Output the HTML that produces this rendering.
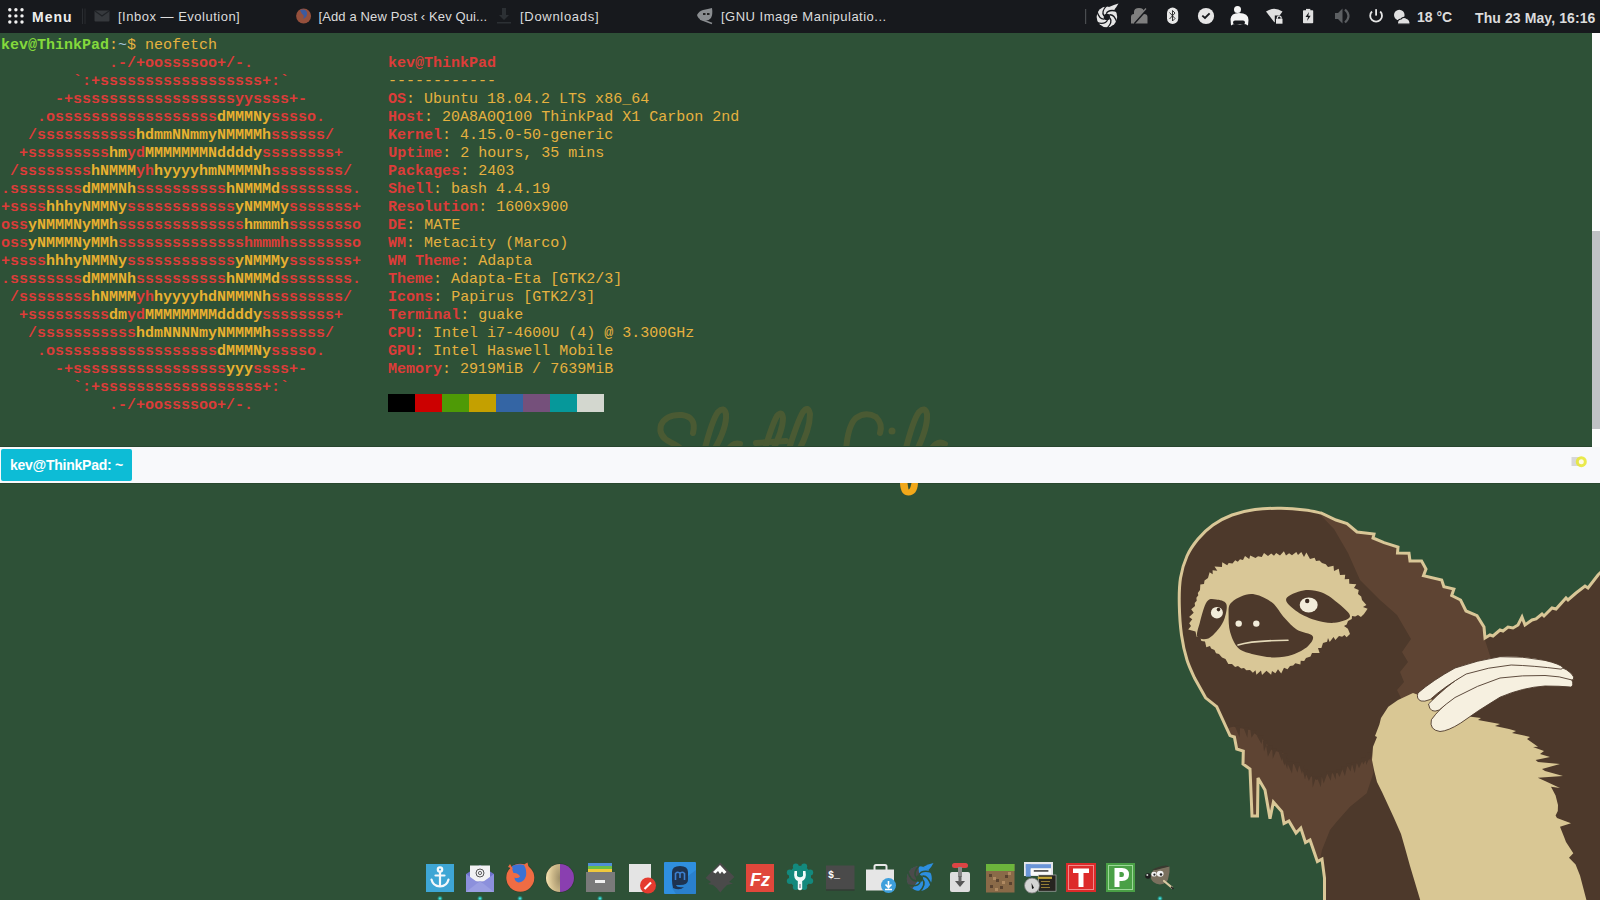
<!DOCTYPE html>
<html><head><meta charset="utf-8">
<style>
html,body{margin:0;padding:0}
body{width:1600px;height:900px;overflow:hidden;position:relative;background:#2e5137;font-family:"Liberation Sans",sans-serif}
#panel{position:absolute;left:0;top:0;width:1600px;height:33px;background:#17191d;color:#dcdcdc;font-size:13px}
#panel .t{position:absolute;top:0;line-height:33px;white-space:nowrap}
#term{position:absolute;left:0;top:33px;width:1592px;height:414px;overflow:hidden}
#term pre{position:absolute;left:1px;top:4px;margin:0;font-family:"Liberation Mono",monospace;font-size:15px;line-height:18px;color:#e0b040}
#term b{font-weight:bold}
.r{color:#dd3c39}.y{color:#e8b030}.g{color:#84d93c}.yl{color:#e6b13f;font-weight:normal}.bl{color:#a4c4dc}
.blk{display:inline-block;width:27px;height:18px;vertical-align:top;position:relative;top:-3px}
#sb{position:absolute;left:1592px;top:33px;width:8px;height:414px;background:#fdfdfd}
#sbt{position:absolute;left:1592px;top:231px;width:8px;height:198px;background:#c0c2c5}
#tabs{position:absolute;left:0;top:447px;width:1600px;height:36px;background:#f8f9fb}
#tab{position:absolute;left:1px;top:2px;width:131px;height:32px;background:#0dbcd6;border-radius:2px;color:#fff;font-weight:bold;font-size:14px;line-height:32px;text-indent:9px;letter-spacing:-0.25px;white-space:nowrap}
#dock{position:absolute;left:0;top:855px;width:1600px;height:45px}
.ic{position:absolute;top:863px;width:30px;height:30px}
</style></head><body>
<svg style="position:absolute;left:0;top:0" width="1600" height="900" viewBox="0 0 1600 900">
<defs><clipPath id="silc"><path d="M1194.4,677.8 C1193.2,674.8 1189.2,667.1 1187.0,660.0 C1184.8,652.9 1182.8,644.2 1181.5,635.0 C1180.2,625.8 1179.5,614.5 1179.3,605.0 C1179.1,595.5 1179.2,586.2 1180.5,578.0 C1181.8,569.8 1184.1,562.5 1187.0,556.0 C1189.9,549.5 1193.7,544.2 1198.0,539.0 C1202.3,533.8 1207.3,529.0 1213.0,525.0 C1218.7,521.0 1225.0,517.6 1232.0,515.0 C1239.0,512.4 1246.8,510.6 1255.0,509.5 C1263.2,508.4 1272.7,508.2 1281.0,508.3 C1289.3,508.4 1298.3,509.2 1305.0,510.0 C1311.7,510.8 1318.3,512.5 1321.0,513.0 L1336,520 L1347,523.6 L1357,532 L1374,534 L1373,538 L1384,542.7 L1398,547 L1397.5,553 L1409,553.3 L1410,561 L1421.6,561 L1426,569 L1423.5,575.6
L1441.7,580 L1443.9,586.7 L1453.9,589 L1451.7,595.6 L1460.6,600 L1466,611 L1477,615.6 L1484,627 L1485,638 L1490,635 L1493,636 L1500,630 L1503,631 L1508,627 L1513,628 L1518,625 L1522,617 L1525,625 L1532,620 L1536,619 L1542,614 L1544,616 L1552,608 L1556,609 L1566,598 L1568,600 L1576,593 L1585,586 L1588,588 L1598,575 L1602,571 L1602,906 L1324.5,906
L1324.5,878 L1322,859 L1317.4,861.5 L1310,840 L1305.5,842.5 L1300.8,828 L1296,833 L1288.9,821 L1284,823.5 L1281.8,811.6
L1273.4,802 L1270,818.8 L1265,790 L1258,778 L1257.5,816 L1252,816 L1250,769 L1243,764 L1243.3,751 L1236.7,749 L1234.4,737 L1230,735.6
L1216.7,706.7 L1205.6,697.8 L1194.4,677.8 Z"/></clipPath></defs>
<path fill="#4d392b" d="M1194.4,677.8 C1193.2,674.8 1189.2,667.1 1187.0,660.0 C1184.8,652.9 1182.8,644.2 1181.5,635.0 C1180.2,625.8 1179.5,614.5 1179.3,605.0 C1179.1,595.5 1179.2,586.2 1180.5,578.0 C1181.8,569.8 1184.1,562.5 1187.0,556.0 C1189.9,549.5 1193.7,544.2 1198.0,539.0 C1202.3,533.8 1207.3,529.0 1213.0,525.0 C1218.7,521.0 1225.0,517.6 1232.0,515.0 C1239.0,512.4 1246.8,510.6 1255.0,509.5 C1263.2,508.4 1272.7,508.2 1281.0,508.3 C1289.3,508.4 1298.3,509.2 1305.0,510.0 C1311.7,510.8 1318.3,512.5 1321.0,513.0 L1336,520 L1347,523.6 L1357,532 L1374,534 L1373,538 L1384,542.7 L1398,547 L1397.5,553 L1409,553.3 L1410,561 L1421.6,561 L1426,569 L1423.5,575.6
L1441.7,580 L1443.9,586.7 L1453.9,589 L1451.7,595.6 L1460.6,600 L1466,611 L1477,615.6 L1484,627 L1485,638 L1490,635 L1493,636 L1500,630 L1503,631 L1508,627 L1513,628 L1518,625 L1522,617 L1525,625 L1532,620 L1536,619 L1542,614 L1544,616 L1552,608 L1556,609 L1566,598 L1568,600 L1576,593 L1585,586 L1588,588 L1598,575 L1602,571 L1602,906 L1324.5,906
L1324.5,878 L1322,859 L1317.4,861.5 L1310,840 L1305.5,842.5 L1300.8,828 L1296,833 L1288.9,821 L1284,823.5 L1281.8,811.6
L1273.4,802 L1270,818.8 L1265,790 L1258,778 L1257.5,816 L1252,816 L1250,769 L1243,764 L1243.3,751 L1236.7,749 L1234.4,737 L1230,735.6
L1216.7,706.7 L1205.6,697.8 L1194.4,677.8 Z"/>
<g clip-path="url(#silc)">
<path fill="#5e4433" d="M1320,514.5 L1336,521.5 L1347,525 L1357,533.5 L1374,535.5 L1373,539.5 L1384,544 L1398,548.5 L1397.5,554.5 L1409,555 L1410,562.5 L1421.6,562.5 L1426,570.5 L1423.5,577 L1441.7,581.5 L1443.9,588 L1453.9,590.5 L1451.7,597 L1460.6,601.5 L1466,612.5 L1477,617 L1484,628.5 L1485,640 L1492,662 L1470,690 L1400,712
L1402,700 L1397,690 L1404,682 L1400,672 L1408,662 L1402,652 L1411,639 L1397,615 L1380,600 L1360,580 L1348,553 L1334,529 Z"/>
<path fill="#5e4433" d="M1190.0,700.0 L1212.0,712.0 L1228.0,728.0 L1233.3,726.7 L1250.0,730.0 L1263.3,740.0 L1271.7,750.0 L1283.3,753.3 L1286.7,763.3 L1300.0,765.0 L1306.7,773.3 L1316.7,780.0 L1326.7,773.3 L1336.7,773.3 L1346.7,766.7 L1356.7,763.3 L1366.7,758.3 L1371.7,753.3 L1372.0,753.0 L1373.3,773.3 L1366.7,793.3 L1350.0,806.7 L1336.7,821.7 L1330.0,830.0 L1322.0,850.0 L1318.0,870.0 L1314.0,906.0 L1180.0,906.0 Z"/>
<path fill="#4d392b" d="M1367.6,752.6 L1369.9,760.8 L1373.2,752.6 Z M1365.0,755.1 L1366.2,765.1 L1370.9,755.1 Z M1360.9,757.6 L1363.2,764.6 L1367.4,757.6 Z M1355.7,760.1 L1359.0,768.3 L1362.7,760.1 Z M1351.5,762.2 L1354.7,773.3 L1356.9,762.2 Z M1346.2,763.8 L1350.6,771.6 L1352.1,763.8 Z M1341.1,766.3 L1344.9,775.9 L1347.3,766.3 Z M1336.0,769.7 L1339.5,777.0 L1342.3,769.7 Z M1332.1,771.3 L1335.6,779.8 L1336.2,771.3 Z M1326.1,771.3 L1330.7,780.7 L1332.2,771.3 Z M1320.8,773.0 L1323.7,783.6 L1327.5,773.0 Z M1316.5,776.3 L1320.9,787.3 L1321.8,776.3 Z M1312.0,776.3 L1312.7,787.7 L1316.3,776.3 Z M1305.7,773.0 L1308.9,781.1 L1312.6,773.0 Z M1302.5,769.2 L1305.0,779.4 L1307.5,769.2 Z M1299.1,765.1 L1302.0,774.0 L1304.2,765.1 Z M1293.3,762.6 L1297.4,772.5 L1300.0,762.6 Z M1286.7,761.8 L1292.0,773.4 L1293.3,761.8 Z M1283.6,758.8 L1287.3,769.2 L1288.1,758.8 Z M1280.8,753.8 L1284.4,765.7 L1287.5,753.8 Z M1278.1,750.5 L1281.7,761.1 L1282.7,750.5 Z M1272.2,748.8 L1272.8,758.7 L1277.0,748.8 Z M1266.1,745.5 L1267.9,756.8 L1273.1,745.5 Z M1262.8,740.5 L1264.0,751.5 L1268.0,740.5 Z M1256.8,735.5 L1261.5,744.0 L1263.2,735.5 Z M1250.4,730.5 L1251.5,737.7 L1256.3,730.5 Z M1243.3,727.2 L1247.4,737.8 L1248.3,727.2 Z M1234.7,725.5 L1239.5,737.4 L1240.3,725.5 Z "/>
</g>
<path fill="none" stroke="#d9c797" stroke-width="3" stroke-linejoin="miter" stroke-miterlimit="3" d="M1194.4,677.8 C1193.2,674.8 1189.2,667.1 1187.0,660.0 C1184.8,652.9 1182.8,644.2 1181.5,635.0 C1180.2,625.8 1179.5,614.5 1179.3,605.0 C1179.1,595.5 1179.2,586.2 1180.5,578.0 C1181.8,569.8 1184.1,562.5 1187.0,556.0 C1189.9,549.5 1193.7,544.2 1198.0,539.0 C1202.3,533.8 1207.3,529.0 1213.0,525.0 C1218.7,521.0 1225.0,517.6 1232.0,515.0 C1239.0,512.4 1246.8,510.6 1255.0,509.5 C1263.2,508.4 1272.7,508.2 1281.0,508.3 C1289.3,508.4 1298.3,509.2 1305.0,510.0 C1311.7,510.8 1318.3,512.5 1321.0,513.0 L1336,520 L1347,523.6 L1357,532 L1374,534 L1373,538 L1384,542.7 L1398,547 L1397.5,553 L1409,553.3 L1410,561 L1421.6,561 L1426,569 L1423.5,575.6
L1441.7,580 L1443.9,586.7 L1453.9,589 L1451.7,595.6 L1460.6,600 L1466,611 L1477,615.6 L1484,627 L1485,638 L1490,635 L1493,636 L1500,630 L1503,631 L1508,627 L1513,628 L1518,625 L1522,617 L1525,625 L1532,620 L1536,619 L1542,614 L1544,616 L1552,608 L1556,609 L1566,598 L1568,600 L1576,593 L1585,586 L1588,588 L1598,575 L1602,571 L1602,906 L1324.5,906
L1324.5,878 L1322,859 L1317.4,861.5 L1310,840 L1305.5,842.5 L1300.8,828 L1296,833 L1288.9,821 L1284,823.5 L1281.8,811.6
L1273.4,802 L1270,818.8 L1265,790 L1258,778 L1257.5,816 L1252,816 L1250,769 L1243,764 L1243.3,751 L1236.7,749 L1234.4,737 L1230,735.6
L1216.7,706.7 L1205.6,697.8 L1194.4,677.8 Z"/>
<path fill="#d9c794" d="M1413,693 L1398,700 L1388.3,706.7 L1381,718 L1379.4,724.4 L1375,736 L1377,737 L1373,746.7 L1372,760 L1374,770 L1377,782 L1382,792 L1388,805 L1394,818 L1401,834 L1405,848 L1410,866 L1422,906 L1588,906 L1580,875.6 L1575.6,864.4 L1569,857.8 L1573.3,853.3 L1566,842 L1564.4,837.8 L1560,826.7 L1571,823.3 L1557,818 L1555.6,815.6 L1557.8,811 L1558,805 L1555.6,795.6 L1551,786.7 L1560,788 L1545,781 L1537.8,777.8 L1563,776 L1545,771 L1542,769 L1560,764 L1538,762 L1535.6,760 L1550,757 L1540,754 L1544,751 L1533,747 L1538,746.7 L1527,739 L1530,737 L1524,735.6 L1512,733 L1516,731 L1509,729 L1495,726 L1500,724 L1489,722 L1478,720 L1481,718 L1471,716.7 L1455,708 Z"/>
<!-- claws -->
<g fill="#f6f0e0" stroke="#4d392b" stroke-width="0.9" stroke-linejoin="round">
<path d="M1431.4,719.7 Q1439,709 1455,696 Q1478,683 1500,676.5 Q1522.5,672.5 1545,673.5 Q1566,675 1572,680 Q1574,686 1570.9,687.1 Q1560,686 1545,686 Q1522.5,687.5 1500,697.2 Q1477.5,710.7 1460.6,723.1 Q1448.2,731 1440,731.5 Q1429,730 1431.4,719.7 Z"/>
<path d="M1428.5,704 Q1445,687 1466,673 Q1488.7,662 1511.2,660 Q1533.7,660 1552,664 Q1570,669 1573.7,677 Q1574,680 1572,680 Q1560,676 1545,675.5 Q1522.5,675 1500,678 Q1477.5,685 1455,697.5 Q1446,704 1439.2,710 Q1430,714 1428.5,704 Z"/>
<path d="M1417.9,693 Q1432.5,680.4 1455,668 Q1477.5,660.1 1500,656.7 Q1522.5,655.9 1545,660.4 Q1560,664 1563,667.5 Q1562,669.5 1560.7,669.1 Q1533.7,665.7 1511.2,665 Q1488.7,666.9 1466.2,674 Q1443.7,687.1 1430.2,699.5 Q1424,702 1421,701 Q1416,699 1417.9,693 Z"/>
</g>

<!-- face mask tan -->
<path fill="#d9c797" d="M1191.0,626.0 L1189.2,623.2 L1192.3,619.3 L1189.1,617.1 L1193.7,612.7 L1191.2,609.2 L1195.0,606.0 L1194.7,603.0 L1196.7,600.7 L1196.4,597.7 L1198.3,595.3 L1197.8,592.9 L1200.0,590.0 L1200.3,584.6 L1204.0,584.0 L1204.5,580.6 L1208.0,578.0 L1209.6,572.2 L1212.7,574.3 L1212.6,570.2 L1217.3,570.7 L1214.5,566.6 L1222.0,567.0 L1222.2,562.3 L1227.2,565.2 L1228.7,563.1 L1232.5,563.5 L1235.2,560.2 L1237.8,561.8 L1240.0,559.2 L1243.0,560.0 L1245.0,556.1 L1249.2,559.0 L1250.2,555.6 L1255.5,558.0 L1258.0,556.3 L1261.8,557.0 L1264.0,552.9 L1268.0,556.0 L1271.2,553.6 L1274.0,555.8 L1276.2,552.9 L1280.0,555.6 L1283.9,551.3 L1286.0,555.4 L1289.1,553.3 L1292.0,555.2 L1296.3,552.0 L1298.0,555.0 L1301.3,552.0 L1304.0,557.0 L1306.4,552.6 L1310.0,559.0 L1314.6,557.7 L1316.0,561.0 L1319.5,560.5 L1322.0,563.0 L1325.8,564.2 L1328.0,567.0 L1333.5,565.8 L1334.0,571.0 L1338.7,568.7 L1340.0,575.0 L1345.2,574.7 L1344.7,579.3 L1349.1,578.9 L1349.3,583.7 L1356.3,584.2 L1354.0,588.0 L1358.7,589.9 L1358.0,594.0 L1361.2,596.6 L1362.0,600.0 L1366.4,605.1 L1363.0,607.0 L1367.6,608.8 L1364.0,614.0 L1360.9,617.1 L1358.0,615.0 L1355.2,616.6 L1352.0,616.0 L1351.8,618.9 L1348.0,621.0 L1346.7,624.6 L1344.0,626.0 L1347.9,628.7 L1350.0,634.0 L1346.6,637.2 L1344.5,635.0 L1342.1,636.8 L1339.0,636.0 L1335.4,639.9 L1333.5,637.0 L1329.7,642.0 L1328.0,638.0 L1327.1,641.8 L1323.0,643.0 L1321.4,648.0 L1318.0,648.0 L1319.6,652.9 L1312.0,653.0 L1310.5,656.5 L1306.0,658.0 L1304.2,661.0 L1300.7,660.7 L1300.4,664.6 L1295.3,663.3 L1293.2,665.5 L1290.0,666.0 L1287.5,669.3 L1284.0,667.7 L1281.2,673.4 L1278.0,669.3 L1275.4,673.2 L1272.0,671.0 L1271.1,674.7 L1266.5,670.8 L1262.0,675.1 L1261.0,670.5 L1256.4,674.8 L1255.5,670.2 L1252.9,672.7 L1250.0,670.0 L1246.3,670.3 L1244.0,668.0 L1241.2,668.4 L1238.0,666.0 L1235.1,667.0 L1232.0,664.0 L1228.3,664.1 L1225.5,659.0 L1222.0,657.5 L1219.0,654.0 L1216.0,653.2 L1214.5,650.0 L1211.1,648.5 L1210.0,646.0 L1206.3,647.3 L1205.0,641.5 L1201.4,641.0 L1200.0,637.0 L1196.6,636.7 L1195.5,631.5 L1188.2,629.5 Z"/>
<path fill="#4d392b" d="M1206.8,601.8 C1209.5,597.9 1212.9,599.1 1216.1,599.5 C1219.4,599.8 1224.8,600.7 1226.2,603.8 C1227.7,606.9 1226.0,613.9 1224.7,618.1 C1223.4,622.3 1221.2,625.7 1218.5,629.0 C1215.7,632.4 1211.8,637.1 1208.3,638.4 C1204.8,639.7 1198.9,639.4 1197.4,636.8 C1196.0,634.2 1198.2,628.6 1199.8,622.8 C1201.3,617.0 1204.1,605.7 1206.8,601.8 Z"/>
<path fill="#4d392b" d="M1286.2,598.7 C1287.4,595.4 1297.3,591.5 1303.3,590.4 C1309.2,589.4 1316.0,590.2 1321.9,592.5 C1327.9,594.7 1334.4,600.1 1339.1,604.1 C1343.7,608.2 1350.7,613.5 1350.0,616.6 C1349.2,619.7 1340.4,622.3 1334.4,622.8 C1328.4,623.3 1320.6,621.8 1314.2,619.7 C1307.7,617.6 1300.2,613.9 1295.5,610.4 C1290.8,606.9 1284.9,602.0 1286.2,598.7 Z"/>
<path fill="#4d392b" d="M1230.1,604.1 C1232.2,601.0 1236.9,598.0 1241.0,596.4 C1245.2,594.7 1249.8,593.4 1255.0,594.5 C1260.2,595.5 1267.2,598.6 1272.1,602.6 C1277.1,606.5 1280.4,613.6 1284.6,618.1 C1288.7,622.7 1292.4,626.8 1297.0,629.8 C1301.7,632.8 1310.8,633.3 1312.6,636.0 C1314.4,638.8 1311.3,643.0 1307.9,646.2 C1304.6,649.3 1298.1,652.8 1292.4,654.7 C1286.7,656.6 1280.4,657.5 1273.7,657.4 C1267.0,657.2 1257.9,655.5 1251.9,653.9 C1246.0,652.3 1241.5,651.3 1237.9,647.7 C1234.3,644.1 1231.7,637.6 1230.1,632.1 C1228.6,626.7 1228.6,619.7 1228.6,615.0 C1228.6,610.4 1228.1,607.2 1230.1,604.1 Z"/>

<g fill="#f2ecda">
<ellipse cx="1216.9" cy="612.7" rx="6" ry="5.8"/>
<ellipse cx="1308.7" cy="604.9" rx="9" ry="7.5"/>
<circle cx="1238.7" cy="623.6" r="3.2"/>
<circle cx="1256.3" cy="623.6" r="3.2"/>
</g>
<g fill="#3a2a20"><circle cx="1218.5" cy="609.6" r="1.8"/><circle cx="1307.2" cy="601" r="2.2"/></g>
<path d="M1238,645 Q1252,640.5 1288,640.2" stroke="#e4d9b8" stroke-width="1.6" fill="none" stroke-linecap="round"/>

</svg><svg style="position:absolute;left:0;top:0" width="1000" height="500" viewBox="0 0 1000 500">
<g fill="none" stroke="#4a5a33" stroke-width="6" stroke-linecap="round">
<path d="M693,433 Q697,417 682,415 Q666,414 661,425 Q658,436 670,442 Q680,447 682,450"/>
<path d="M704,452 Q712,420 718,412 Q724,406 726,414 Q727,428 714,450"/>
<path d="M728,450 Q733,442 740,444"/>
<path d="M756,443 L786,441"/>
<path d="M764,452 Q772,425 777,416 Q782,410 783,418 Q783,430 772,452"/>
<path d="M788,452 Q798,420 803,412 Q808,405 810,414 Q810,430 798,452"/>
<path d="M846,450 Q848,425 856,418 Q866,411 876,417 Q883,424 880,433"/>
<path d="M905,452 Q913,420 919,412 Q925,406 927,414 Q928,428 916,452"/>
<path d="M932,448 Q938,440 945,444"/>
</g>
<circle cx="892" cy="431" r="3.5" fill="#4b5b33"/>
</svg>
<div id="panel">
 <svg style="position:absolute;left:0;top:0" width="1600" height="33" viewBox="0 0 1600 33">
  <g fill="#f2f2f2"><circle cx="9.8" cy="9.8" r="1.7"/><circle cx="15.9" cy="9.8" r="1.7"/><circle cx="22" cy="9.8" r="1.7"/>
  <circle cx="9.8" cy="15.9" r="1.7"/><circle cx="15.9" cy="15.9" r="1.7"/><circle cx="22" cy="15.9" r="1.7"/>
  <circle cx="9.8" cy="22" r="1.7"/><circle cx="15.9" cy="22" r="1.7"/><circle cx="22" cy="22" r="1.7"/></g>
  <rect x="82" y="8.5" width="1" height="15.5" fill="#2a2d31"/><rect x="84.5" y="8.5" width="1" height="15.5" fill="#2a2d31"/>
  <!-- mail dim -->
  <rect x="94.5" y="10.5" width="15" height="11" rx="1" fill="#36393d"/><path d="M95,11 L102,16 L109,11" stroke="#1f2226" stroke-width="1.2" fill="none"/>
  <!-- firefox dim -->
  <circle cx="303.6" cy="16" r="7.5" fill="#95503c"/><path d="M300,10 Q305,8.5 307,12 Q308,17 303,19 Q305,15 302,14 Z" fill="#3d5a9e"/>
  <!-- downloads dim -->
  <path d="M502,8 L506,8 L506,15 L509,15 L504,20 L499,15 L502,15 Z" fill="#2c3034"/><rect x="497" y="22" width="14" height="1.5" fill="#2c3034"/>
  <!-- gimp -->
  <path d="M697,15 Q699,11 703,10 Q708,9 712,8 Q713,14 711,18 Q708,22 702,20 Q698,19 697,15 Z" fill="#8a8d90"/>
  <path d="M700,19 L712,23.5" stroke="#8a8d90" stroke-width="1.5"/>
  <g fill="#222"><rect x="703" y="13" width="2.5" height="2"/><rect x="707" y="13" width="2.5" height="2"/></g>
  <rect x="1085" y="9" width="1.2" height="15" fill="#4a4d50"/>
  <!-- shutter -->
  <circle cx="1106.9" cy="16.9" r="10.3" fill="#e6e6e6"/>
  <path d="M1109,7 Q1114,4.5 1118.5,3.5 Q1116,8 1114,10 Z" fill="#e6e6e6"/>
  <path d="M1109.9,18.0 Q1113.0,22.0 1106.9,28.4" stroke="#17191d" stroke-width="1.3" fill="none"/><path d="M1107.5,20.1 Q1105.5,24.8 1096.9,22.7" stroke="#17191d" stroke-width="1.3" fill="none"/><path d="M1104.4,19.0 Q1099.4,19.6 1096.9,11.2" stroke="#17191d" stroke-width="1.3" fill="none"/><path d="M1103.9,15.8 Q1100.8,11.8 1106.9,5.4" stroke="#17191d" stroke-width="1.3" fill="none"/><path d="M1106.3,13.7 Q1108.3,9.0 1116.9,11.2" stroke="#17191d" stroke-width="1.3" fill="none"/><path d="M1109.4,14.8 Q1114.4,14.2 1116.9,22.6" stroke="#17191d" stroke-width="1.3" fill="none"/>
  <circle cx="1106.9" cy="16.9" r="3.2" fill="#17191d"/>
  <!-- crossed grey -->
  <path d="M1131,23.5 L1131,17 Q1131,14 1134,14 L1134,12 Q1134,8 1139,8 Q1144,8 1144,12 L1144,14 Q1147.5,14 1147.5,17 L1147.5,23.5 Z" fill="#7f7f7f"/>
  <path d="M1134,23.5 L1147,9" stroke="#17191d" stroke-width="2"/><path d="M1133,23 L1146,8.5" stroke="#7f7f7f" stroke-width="1.2"/>
  <!-- bluetooth -->
  <rect x="1167" y="7.5" width="11.2" height="16.5" rx="5.6" fill="#e8e8e8"/>
  <path d="M1169.5,12.5 L1175,18.5 L1172.5,21 L1172.5,10.5 L1175,13 L1169.5,19" stroke="#222" stroke-width="0.9" fill="none"/>
  <!-- check -->
  <circle cx="1206" cy="16" r="8.1" fill="#e6e6e6"/><path d="M1202.3,15.6 L1205,18 L1209.6,13.4" stroke="#17191d" stroke-width="1.9" fill="none"/>
  <!-- ghost-ish -->
  <circle cx="1237.5" cy="9.5" r="3.5" fill="#f4f4f4"/>
  <path d="M1231,25.5 L1230.5,19 Q1231,13 1239,13 Q1248.5,13 1248.5,20 L1248,25.5 Q1244,23 1240,25 Q1235,23 1231,25.5 Z" fill="#f4f4f4"/>
  <rect x="1233" y="20.5" width="12" height="4" rx="2" fill="#17191d"/>
  <!-- wifi -->
  <path d="M1266,11.5 Q1274,6 1282.5,11.5 L1274.5,22.5 Z" fill="#e0e0e0"/>
  <rect x="1274.8" y="15.5" width="9" height="9.5" fill="#17191d"/>
  <rect x="1276" y="18.7" width="6.5" height="5" fill="#e6e6e6"/><path d="M1277.4,18.7 L1277.4,17.2 Q1279.25,14.8 1281.1,17.2 L1281.1,18.7" stroke="#e6e6e6" stroke-width="1.2" fill="none"/>
  <!-- battery -->
  <rect x="1303" y="10.3" width="10.2" height="12.9" rx="0.8" fill="#e0e0e0"/><rect x="1306" y="8.9" width="4.3" height="2" fill="#e0e0e0"/>
  <path d="M1309,12 L1305.5,17 L1308,17 L1307,21 L1310.7,15.8 L1308.3,15.8 Z" fill="#17191d"/>
  <!-- volume grey -->
  <path d="M1335,13 L1338,13 L1342.5,8.5 L1342.5,23.5 L1338,19 L1335,19 Z" fill="#5c5f62"/>
  <path d="M1345,9.5 Q1352,16 1345,22.5" stroke="#5c5f62" stroke-width="2.2" fill="none"/>
  <!-- power -->
  <path d="M1372,11.5 A5.9,5.9 0 1,0 1380.2,11.5" stroke="#e6e6e6" stroke-width="1.8" fill="none"/>
  <rect x="1375.2" y="9.2" width="1.8" height="6.4" fill="#e6e6e6"/>
  <!-- weather -->
  <circle cx="1399.3" cy="15" r="5.3" fill="#e0e0e0"/>
  <path d="M1397.5,24.2 Q1397,19.5 1401,19 Q1403.5,16 1407,18.5 Q1410.5,20 1410,24.2 Z" fill="#e0e0e0" stroke="#17191d" stroke-width="1.2"/>
 </svg>
 <div class="t" style="left:32px;top:1px;font-weight:bold;font-size:14px;letter-spacing:1px;color:#eee">Menu</div>
 <div class="t" style="left:118px;letter-spacing:0.5px">[Inbox — Evolution]</div>
 <div class="t" style="left:318.5px;letter-spacing:0.12px">[Add a New Post ‹ Kev Qui...</div>
 <div class="t" style="left:520px;letter-spacing:0.7px">[Downloads]</div>
 <div class="t" style="left:721px;letter-spacing:0.5px">[GNU Image Manipulatio...</div>
 <div class="t" style="left:1417px;top:1px;font-weight:bold;font-size:14px">18 °C</div>
 <div class="t" style="left:1475px;top:2px;font-weight:bold;font-size:14px;letter-spacing:0.1px">Thu 23 May, 16:16</div>
</div>
<div id="term"><pre><b class=g>kev@ThinkPad</b><span class=yl>:</span><span class=bl>~</span><span class=yl>$ neofetch</span>
<b class=r>            .-/+oossssoo+/-.</b>               <b class=r>kev@ThinkPad</b>
<b class=r>        `:+ssssssssssssssssss+:`</b>           <span class=yl>------------</span>
<b class=r>      -+ssssssssssssssssssyyssss+-</b>         <b class=r>OS</b><span class=yl>: Ubuntu 18.04.2 LTS x86_64</span>
<b class=r>    .ossssssssssssssssss</b><b class=y>dMMMNy</b><b class=r>sssso.</b>       <b class=r>Host</b><span class=yl>: 20A8A0Q100 ThinkPad X1 Carbon 2nd</span>
<b class=r>   /sssssssssss</b><b class=y>hdmmNNmmyNMMMMh</b><b class=r>ssssss/</b>      <b class=r>Kernel</b><span class=yl>: 4.15.0-50-generic</span>
<b class=r>  +sssssssss</b><b class=y>hm</b><b class=r>yd</b><b class=y>MMMMMMMNddddy</b><b class=r>ssssssss+</b>     <b class=r>Uptime</b><span class=yl>: 2 hours, 35 mins</span>
<b class=r> /ssssssss</b><b class=y>hNMMM</b><b class=r>yh</b><b class=y>hyyyyhmNMMMNh</b><b class=r>ssssssss/</b>    <b class=r>Packages</b><span class=yl>: 2403</span>
<b class=r>.ssssssss</b><b class=y>dMMMNh</b><b class=r>ssssssssss</b><b class=y>hNMMMd</b><b class=r>ssssssss.</b>   <b class=r>Shell</b><span class=yl>: bash 4.4.19</span>
<b class=r>+ssss</b><b class=y>hhhyNMMNy</b><b class=r>ssssssssssss</b><b class=y>yNMMMy</b><b class=r>sssssss+</b>   <b class=r>Resolution</b><span class=yl>: 1600x900</span>
<b class=r>oss</b><b class=y>yNMMMNyMMh</b><b class=r>ssssssssssssss</b><b class=y>hmmmh</b><b class=r>ssssssso</b>   <b class=r>DE</b><span class=yl>: MATE</span>
<b class=r>oss</b><b class=y>yNMMMNyMMh</b><b class=r>sssssssssssssshmmmhssssssso</b>   <b class=r>WM</b><span class=yl>: Metacity (Marco)</span>
<b class=r>+ssss</b><b class=y>hhhyNMMNy</b><b class=r>ssssssssssss</b><b class=y>yNMMMy</b><b class=r>sssssss+</b>   <b class=r>WM Theme</b><span class=yl>: Adapta</span>
<b class=r>.ssssssss</b><b class=y>dMMMNh</b><b class=r>ssssssssss</b><b class=y>hNMMMd</b><b class=r>ssssssss.</b>   <b class=r>Theme</b><span class=yl>: Adapta-Eta [GTK2/3]</span>
<b class=r> /ssssssss</b><b class=y>hNMMM</b><b class=r>yh</b><b class=y>hyyyyhdNMMMNh</b><b class=r>ssssssss/</b>    <b class=r>Icons</b><span class=yl>: Papirus [GTK2/3]</span>
<b class=r>  +sssssssss</b><b class=y>dm</b><b class=r>yd</b><b class=y>MMMMMMMMddddy</b><b class=r>ssssssss+</b>     <b class=r>Terminal</b><span class=yl>: guake</span>
<b class=r>   /sssssssssss</b><b class=y>hdmNNNNmyNMMMMh</b><b class=r>ssssss/</b>      <b class=r>CPU</b><span class=yl>: Intel i7-4600U (4) @ 3.300GHz</span>
<b class=r>    .ossssssssssssssssss</b><b class=y>dMMMNy</b><b class=r>sssso.</b>       <b class=r>GPU</b><span class=yl>: Intel Haswell Mobile</span>
<b class=r>      -+sssssssssssssssss</b><b class=y>yyy</b><b class=r>ssss+-</b>         <b class=r>Memory</b><span class=yl>: 2919MiB / 7639MiB</span>
<b class=r>        `:+ssssssssssssssssss+:`</b>           
<b class=r>            .-/+oossssoo+/-.</b>               <span class=blk style="background:#000000">   </span><span class=blk style="background:#cc0000">   </span><span class=blk style="background:#4e9a06">   </span><span class=blk style="background:#c4a000">   </span><span class=blk style="background:#3465a4">   </span><span class=blk style="background:#75507b">   </span><span class=blk style="background:#06989a">   </span><span class=blk style="background:#d3d7cf">   </span>
</pre></div><div id="sb"></div><div id="sbt"></div>
<div style="position:absolute;left:0;top:446px;width:1592px;height:1px;background:#27452e"></div><div id="tabs"><div id="tab">kev@ThinkPad: ~</div></div>
<div style="position:absolute;left:0;top:483px;width:1600px;height:1px;background:#29482f"></div><svg style="position:absolute;left:895px;top:483px" width="30" height="16" viewBox="895 483 30 16">
<path d="M900,483 Q900.5,495.5 908.5,495.5 Q917.5,495 918,483 Z" fill="#f1a81a"/>
<path d="M907.5,483 L908.5,489.5 Q910,490 911.5,483 Z" fill="#2e5137"/>
</svg>
<svg style="position:absolute;left:1565px;top:452px" width="30" height="25" viewBox="1565 452 30 25">
<rect x="1571.5" y="457" width="9" height="9" fill="#c9c9c9" opacity="0.7"/>
<circle cx="1581.3" cy="461.7" r="5.5" fill="#e8e838" opacity="0.9"/>
<circle cx="1581.3" cy="461.7" r="2.5" fill="#fffbe6"/>
</svg>
<svg style="position:absolute;left:0;top:850px" width="1600" height="50" viewBox="0 850 1600 50">
<defs>
<radialGradient id="dotg"><stop offset="0" stop-color="#5ff" stop-opacity="1"/><stop offset="1" stop-color="#0cc" stop-opacity="0"/></radialGradient>
</defs>
<!-- 1 anchor -->
<rect x="426" y="864" width="28" height="28" fill="#3ea6d5"/>
<g fill="none" stroke="#f4f8fb" stroke-width="2.2" stroke-linecap="round">
<circle cx="440" cy="869.5" r="2.2"/><line x1="440" y1="872" x2="440" y2="886"/><line x1="435.5" y1="875.5" x2="444.5" y2="875.5"/>
<path d="M431.5,879.5 Q433,886 440,886.5 Q447,886 448.5,879.5"/></g>
<!-- 2 mail -->
<path d="M466,874 L480,865 L494,874 L494,892 L466,892 Z" fill="#6e72cc"/>
<rect x="470" y="865.5" width="20" height="16" fill="#f2f2f4"/>
<circle cx="480" cy="873" r="4" fill="none" stroke="#555" stroke-width="1"/><circle cx="480" cy="873" r="1.6" fill="none" stroke="#555" stroke-width="0.9"/>
<path d="M466,874 L480,884 L494,874 L494,892 L466,892 Z" fill="#8c90dc"/>
<path d="M466,892 L480,881 L494,892 Z" fill="#9a9ee2"/>
<!-- 3 firefox -->
<circle cx="520.3" cy="877.8" r="14.5" fill="#2a2f25" opacity="0.5"/>
<circle cx="520.3" cy="877.8" r="14" fill="#f06c43"/>
<path d="M512,866 Q518,863 524,865 Q527,870 526,876 Q524,882 518.5,882.5 Q514.5,881.5 514.5,877.5 Q518,879 520,876.5 Q518,872.5 513.5,873 Q512,870 512,866 Z" fill="#3b72d4"/>
<path d="M508,867 L510,864 L513,869 Z M524,864.5 L527.5,862.5 L528.5,867 Z" fill="#f06c43"/>
<radialGradient id="halfg" cx="1" cy="0.5" r="1"><stop offset="0" stop-color="#9c8d68"/><stop offset="0.55" stop-color="#cdb98a"/><stop offset="1" stop-color="#f6e4b0"/></radialGradient>
<!-- 4 half circle -->
<circle cx="560" cy="878" r="14.5" fill="#2a3a2a"/>
<path d="M560,864 A14,14 0 0,0 560,892 Z" fill="url(#halfg)"/>
<path d="M560,864 A14,14 0 0,1 560,892 Z" fill="#8a3fb0"/>
<!-- 5 file cabinet -->
<rect x="588" y="863" width="24" height="4" fill="#4f8ed6"/>
<rect x="588" y="866" width="24" height="3" fill="#6cbe45"/>
<rect x="588" y="869" width="24" height="3" fill="#f0c93c"/>
<rect x="586" y="872" width="29" height="20" fill="#7a7a7a"/>
<rect x="595" y="880" width="10" height="3" fill="#f0f0f0"/>
<!-- 6 text editor -->
<rect x="629" y="864" width="22" height="28" fill="#e4e4e4"/>
<circle cx="648" cy="885.5" r="8" fill="#e53b2f"/>
<path d="M644.5,889 L651,882.5" stroke="#fff" stroke-width="2.2"/>
<!-- 7 mastodon -->
<rect x="664" y="862" width="32" height="32" rx="1" fill="#2f8fe0"/>
<path d="M696,870 L696,894 L676,894 L672,888 Z" fill="#2877c0" opacity="0.6"/>
<path d="M672,872 Q672,866 680,866 Q688,866 688,872 L688,880 Q688,885 680,885 L676,885 Q677,888 684,887 Q680,891 673,888 Q672,884 672,880 Z" fill="#1e3350"/>
<path d="M675.5,880 L675.5,873.5 Q678,871 680,873.5 L680,878 M680,873.5 Q682,871 684.5,873.5 L684.5,880" stroke="#3c7fd0" stroke-width="1.6" fill="none"/>
<!-- 8 inkscape -->
<path d="M720.3,862.5 L734.5,877 L729,882 L733,883.5 L727,885 L724,888 L720.3,892.5 L716.5,888 L713,885 L708,884 L711,882 L705.5,878 Z" fill="#4a4a4a"/>
<path d="M720,865 L726.5,872 L724,874 L722,871.5 L720,874 L718,871 L715.5,873.5 L713,872 Z" fill="#ffffff"/>
<!-- 9 filezilla -->
<rect x="746" y="864" width="28" height="28" fill="#e0473b"/>
<text x="760" y="886" font-family="Liberation Sans" font-weight="bold" font-style="italic" font-size="18" fill="#fff" text-anchor="middle">Fz</text>
<!-- 10 teal gear wrench -->
<g fill="#13897d"><circle cx="800" cy="876.8" r="11"/><circle cx="810.2" cy="881.0" r="3"/><circle cx="804.2" cy="887.0" r="3"/><circle cx="795.8" cy="887.0" r="3"/><circle cx="789.8" cy="881.0" r="3"/><circle cx="789.8" cy="872.6" r="3"/><circle cx="795.8" cy="866.6" r="3"/><circle cx="804.2" cy="866.6" r="3"/><circle cx="810.2" cy="872.6" r="3"/></g>
<path d="M794.5,871 Q793,879 797.8,881 L797.8,889 Q800,891.5 802.2,889 L802.2,881 Q807,879 805.5,871 L803,871 L803,876 Q800,878.5 797,876 L797,871 Z" fill="#f2fbfa"/>
<rect x="799.3" y="884" width="1.4" height="4" fill="#889"/>
<!-- 11 terminal -->
<rect x="826" y="865.5" width="28.5" height="24" fill="#4a4a4a"/>
<rect x="826" y="889.5" width="28.5" height="1" fill="#333"/>
<text x="828" y="878" font-family="Liberation Mono" font-weight="bold" font-size="10" fill="#fff">$_</text>
<!-- 12 briefcase -->
<rect x="874.5" y="865" width="12" height="6" rx="1.5" fill="none" stroke="#e8e8e8" stroke-width="2"/>
<rect x="866" y="869.5" width="28" height="21" fill="#e6e6e6"/>
<circle cx="888.5" cy="885.5" r="7.5" fill="#3d9fdc"/>
<path d="M888.5,881 L888.5,887 M885.5,884.5 L888.5,887.5 L891.5,884.5 M885,889.5 L892,889.5" stroke="#fff" stroke-width="1.6" fill="none"/>
<!-- 13 shutter blue -->
<circle cx="919.5" cy="878.5" r="12.3" fill="#2d8fe0"/>
<path d="M919.5,878.5 L912.2,889.0 A12.8,12.8 0 0,1 918.4,865.7 Z" fill="#4b4b4b"/>
<path d="M923,867 Q928,864 933.5,863 Q931,868 928.5,870 Z" fill="#2d8fe0"/>
<path d="M922.9,879.7 Q926.4,884.3 919.5,891.8" stroke="#2e5137" stroke-width="1.6" fill="none"/><path d="M920.1,882.0 Q917.9,887.4 908.0,885.1" stroke="#2e5137" stroke-width="1.6" fill="none"/><path d="M916.7,880.8 Q911.0,881.6 908.0,871.9" stroke="#2e5137" stroke-width="1.6" fill="none"/><path d="M916.1,877.3 Q912.6,872.7 919.5,865.2" stroke="#2e5137" stroke-width="1.6" fill="none"/><path d="M918.9,875.0 Q921.1,869.6 931.0,871.9" stroke="#2e5137" stroke-width="1.6" fill="none"/><path d="M922.3,876.2 Q928.0,875.4 931.0,885.1" stroke="#2e5137" stroke-width="1.6" fill="none"/>
<circle cx="919.5" cy="878.5" r="3.6" fill="#2e5137"/>
<!-- 14 transmission -->
<rect x="950" y="872" width="20" height="20" rx="2" fill="#dedede"/>
<rect x="952" y="863" width="16" height="5" rx="2.5" fill="#dc4444"/>
<rect x="958" y="867" width="4" height="10" fill="#888"/>
<path d="M955,881 L965,881 L960,887 Z" fill="#555"/><rect x="958.5" y="876" width="3" height="6" fill="#666"/>
<!-- 15 minecraft -->
<rect x="986" y="864" width="28.5" height="28.5" fill="#8a6a48"/>
<rect x="986" y="864" width="28.5" height="7" fill="#6cb53c"/>
<g fill="#5a4330"><rect x="989" y="874" width="3" height="3"/><rect x="996" y="879" width="3" height="3"/><rect x="1005" y="875" width="3" height="3"/><rect x="1000" y="886" width="3" height="3"/><rect x="1009" y="882" width="3" height="3"/><rect x="990" y="885" width="3" height="3"/></g>
<g fill="#b08a62"><rect x="993" y="877" width="3" height="3"/><rect x="1002" y="881" width="3" height="3"/><rect x="1008" y="872" width="3" height="3"/><rect x="995" y="888" width="3" height="3"/></g>
<!-- 16 screenshot lock -->
<rect x="1024" y="862" width="29" height="14" fill="#e4e6ea"/>
<rect x="1025.8" y="864.2" width="25.2" height="4" fill="#6a95d8"/>
<rect x="1025.8" y="864.2" width="5" height="12.5" fill="#6a95d8"/>
<rect x="1030.7" y="868.7" width="20.3" height="6.2" fill="#fafafa"/>
<rect x="1033.8" y="870" width="14.6" height="1.8" fill="#555"/>
<rect x="1038.5" y="875" width="17.5" height="16.2" fill="#262420" stroke="#bbb" stroke-width="0.6"/>
<rect x="1037.8" y="876.7" width="14.2" height="2.2" fill="#c8a838"/><rect x="1041" y="881" width="9" height="0.9" fill="#a08838"/><rect x="1041" y="884" width="8" height="0.9" fill="#a08838"/><rect x="1041" y="887" width="9" height="0.9" fill="#a08838"/>
<circle cx="1032" cy="885.6" r="7.5" fill="#d4d4d4" stroke="#777" stroke-width="0.8"/>
<path d="M1031.5,883 L1034,888 L1032,889 Z" fill="#111"/>
<!-- 17 T red -->
<rect x="1066" y="863" width="30" height="29" fill="#dd2a2a"/>
<rect x="1068.5" y="865.5" width="25" height="24" fill="none" stroke="#f08a8a" stroke-width="1"/>
<path d="M1073,868.5 L1089,868.5 L1089,873 L1083.5,873 L1083.5,887 L1078.5,887 L1078.5,873 L1073,873 Z" fill="#fff"/>
<!-- 18 P green -->
<rect x="1106" y="863" width="29" height="29" fill="#4aa046"/>
<rect x="1108.5" y="865.5" width="24" height="24" fill="none" stroke="#9cd898" stroke-width="1"/>
<path d="M1114.5,868 L1122,868 Q1129,868 1129,874.5 Q1129,881 1122,881 L1119.5,881 L1119.5,887 L1114.5,887 Z M1119.5,872 L1119.5,877 L1122,877 Q1124,877 1124,874.5 Q1124,872 1122,872 Z" fill="#fff" fill-rule="evenodd"/>
<!-- 19 gimp -->
<path d="M1150.5,877 Q1151,870 1157,868.5 Q1163,867.5 1169.5,866.5 Q1170,873 1168.5,877 Q1168,884 1160,884.5 Q1152,884 1150.5,877 Z" fill="#7a705e"/>
<path d="M1152,870 Q1158,866 1166,865.5 L1169.5,866.5 Q1162,868 1156,870 Z" fill="#3a3a30"/>
<circle cx="1148" cy="876" r="2.8" fill="#1e1e1e"/><circle cx="1147.3" cy="875" r="1" fill="#cfd8d0"/>
<ellipse cx="1154" cy="874.2" rx="2.6" ry="2.4" fill="#f0f0f0"/><ellipse cx="1160.2" cy="873.8" rx="3.4" ry="3" fill="#f2f2f2"/>
<circle cx="1154.4" cy="874.6" r="1.1" fill="#222"/><circle cx="1161" cy="874.5" r="1.3" fill="#222"/>
<path d="M1164,881 L1172,887.6" stroke="#d8c8a0" stroke-width="2.2" stroke-linecap="round"/>
<path d="M1171,886.8 L1173.5,889" stroke="#222" stroke-width="1.5"/>
<!-- indicator dots -->
<g fill="url(#dotg)"><circle cx="440" cy="898.5" r="3"/><circle cx="480" cy="898.5" r="3"/><circle cx="520" cy="898.5" r="3"/><circle cx="600" cy="898.5" r="3"/><circle cx="1160" cy="898.5" r="3"/></g>
</svg>
</body></html>
